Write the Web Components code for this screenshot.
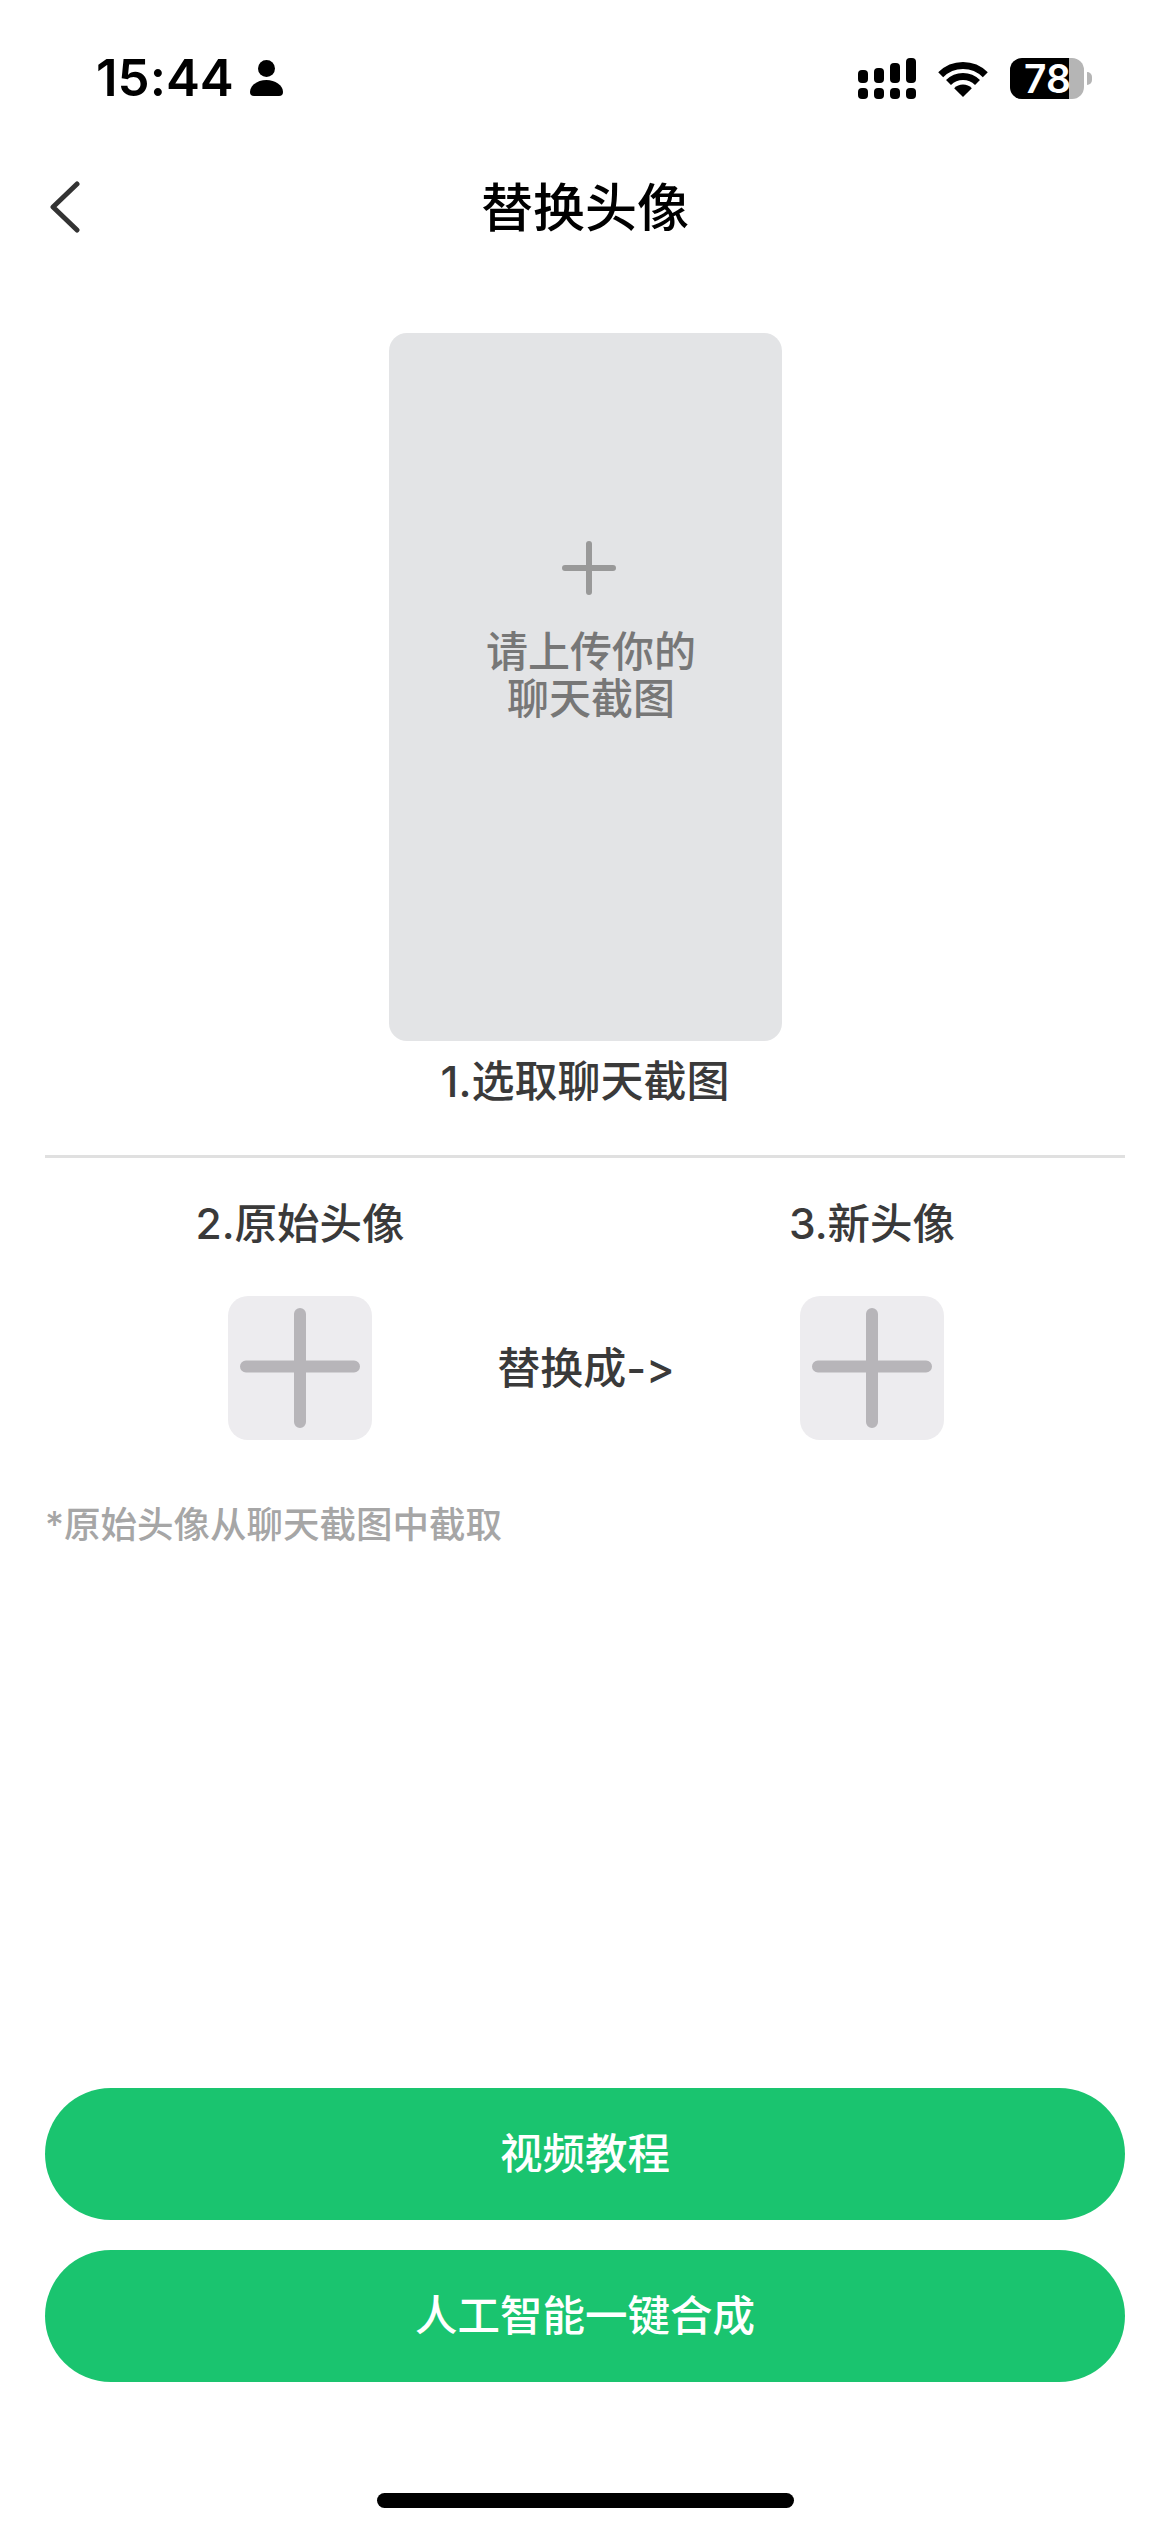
<!DOCTYPE html>
<html lang="zh-CN">
<head>
<meta charset="utf-8">
<title>替换头像</title>
<style>
  html, body { margin: 0; padding: 0; background: #fff; }
  body {
    width: 1170px;
    height: 2532px;
    overflow: hidden;
    font-family: Inter, "Noto Sans CJK SC", sans-serif;
    font-variant-ligatures: none;
    font-feature-settings: "calt" 0;
  }
</style>
</head>
<body>
<swap-app>
  <status-bar slot="top" time="15:44" battery="78"></status-bar>
  <nav-bar slot="top">替换头像</nav-bar>
  <upload-card slot="top">请上传你的<br>聊天截图</upload-card>
  <step-label slot="top" class="first">1.选取聊天截图</step-label>
  <swap-row slot="top">
    <avatar-slot slot="from">2.原始头像</avatar-slot>
    <span slot="middle">替换成-&gt;</span>
    <avatar-slot slot="to">3.新头像</avatar-slot>
  </swap-row>
  <hint-text slot="top">*原始头像从聊天截图中截取</hint-text>
  <action-button slot="bottom">视频教程</action-button>
  <action-button slot="bottom">人工智能一键合成</action-button>
</swap-app>

<script>
class BaseElement extends HTMLElement {
  connectedCallback() {
    if (!this.shadowRoot) this.attachShadow({ mode: "open" });
    this.shadowRoot.innerHTML = `<style>${this.constructor.styles}</style>${this.markup()}`;
  }
}

class SwapApp extends BaseElement {
  static get styles() {
    return /* css */`
      :host { display: flex; flex-direction: column; height: 2532px; background: #fff; }
      .top { flex: 1; display: flex; flex-direction: column; }
      .bottom { display: flex; flex-direction: column; gap: 30px; padding: 0 45px; }
      .home {
        width: 417px;
        height: 15px;
        margin: 111px auto 24px;
        border-radius: 8px;
        background: #000;
      }
    `;
  }

  markup() {
    return /* html */`
      <div class="top"><slot name="top"></slot></div>
      <div class="bottom"><slot name="bottom"></slot></div>
      <div class="home"></div>
    `;
  }
}

class StatusBar extends BaseElement {
  static get styles() {
    return /* css */`
      :host {
        display: flex;
        align-items: center;
        height: 156px;
        padding: 0 78px 0 96px;
        box-sizing: border-box;
        color: #000;
      }
      .time { font-size: 51px; font-weight: 600; line-height: 60px; }
      .person { margin-left: 16px; }
      .right { margin-left: auto; display: flex; align-items: center; gap: 22px; }
      svg { display: block; }
      .battery { display: flex; align-items: center; gap: 3px; }
      .shell {
        display: flex;
        width: 74px;
        height: 41px;
        border-radius: 12px;
        background: #b5b5b5;
      }
      .fill {
        display: flex;
        justify-content: flex-end;
        width: 59px;
        border-radius: 12px 0 0 12px;
        background: #000;
        color: #fff;
        font-size: 39px;
        font-weight: 600;
        line-height: 41px;
      }
      .fill span { margin-right: -2px; }
      .nub { width: 5px; height: 13px; border-radius: 0 6px 6px 0; background: #b5b5b5; }
    `;
  }

  markup() {
    return /* html */`
      <span class="time">${this.getAttribute("time")}</span>
      <svg class="person" width="33" height="36" viewBox="0 0 33 36" fill="#000">
        <circle cx="16.5" cy="8.5" r="8.5"/>
        <path d="M4 36Q0 36 0 32C0 25 8 20 16.5 20C25 20 33 25 33 32Q33 36 29 36Z"/>
      </svg>
      <div class="right">
        <svg width="58" height="41" viewBox="0 0 58 41" fill="#000">
          <rect x="0" y="12" width="10" height="13" rx="4"/>
          <rect x="16" y="10" width="10" height="15" rx="4"/>
          <rect x="32" y="5" width="10" height="20" rx="4"/>
          <rect x="48" y="0" width="10" height="25" rx="4"/>
          <rect x="0" y="30" width="10" height="11" rx="4"/>
          <rect x="16" y="30" width="10" height="11" rx="4"/>
          <rect x="32" y="30" width="10" height="11" rx="4"/>
          <rect x="48" y="30" width="10" height="11" rx="4"/>
        </svg>
        <svg width="50" height="37" viewBox="0 0 50 37">
          <path d="M2.7 14.7A31.5 31.5 0 0 1 47.3 14.7" fill="none" stroke="#000" stroke-width="7"/>
          <path d="M10.5 22.5A20.5 20.5 0 0 1 39.5 22.5" fill="none" stroke="#000" stroke-width="7"/>
          <path d="M25 37L16.16 28.16A12.5 12.5 0 0 1 33.84 28.16Z" fill="#000"/>
        </svg>
        <div class="battery">
          <div class="shell"><div class="fill"><span>${this.getAttribute("battery")}</span></div></div>
          <div class="nub"></div>
        </div>
      </div>
    `;
  }
}

class NavBar extends BaseElement {
  static get styles() {
    return /* css */`
      :host {
        display: flex;
        align-items: center;
        justify-content: center;
        position: relative;
        box-sizing: border-box;
        height: 102px;
        padding-bottom: 6px;
        font-size: 52px;
        font-weight: 500;
        color: #000;
      }
      svg { position: absolute; left: 50px; top: 25px; }
    `;
  }

  markup() {
    return /* html */`
      <svg width="30" height="52" viewBox="0 0 30 52">
        <path d="M27 3L3 26L27 49" fill="none" stroke="#333" stroke-width="5" stroke-linecap="round" stroke-linejoin="round"/>
      </svg>
      <slot></slot>
    `;
  }
}

class UploadCard extends BaseElement {
  static get styles() {
    return /* css */`
      :host {
        display: flex;
        flex-direction: column;
        align-items: center;
        box-sizing: border-box;
        width: 393px;
        height: 708px;
        margin: 75px auto 0;
        padding: 208px 0 0 8px;
        border-radius: 18px;
        background: #e3e4e6;
      }
      svg { display: block; }
      .text {
        margin-top: 33px;
        padding-left: 4px;
        font-size: 42px;
        font-weight: 500;
        line-height: 47px;
        color: #777;
        text-align: center;
      }
    `;
  }

  markup() {
    return /* html */`
      <svg width="54" height="54" viewBox="0 0 54 54">
        <path d="M3 27H51M27 3V51" stroke="#999" stroke-width="6" stroke-linecap="round"/>
      </svg>
      <div class="text"><slot></slot></div>
    `;
  }
}

class StepLabel extends BaseElement {
  static get styles() {
    return /* css */`
      :host {
        display: block;
        box-sizing: border-box;
        margin: 15px 45px 0;
        height: 102px;
        border-bottom: 3px solid #e0e0e0;
        font-size: 43px;
        font-weight: 500;
        line-height: 50px;
        color: #3a3a3a;
        text-align: center;
      }
    `;
  }

  markup() {
    return `<slot></slot>`;
  }
}

class SwapRow extends BaseElement {
  static get styles() {
    return /* css */`
      :host {
        display: grid;
        grid-template-columns: 340px 1fr 340px;
        padding: 41px 128px 0 130px;
      }
      .middle {
        display: flex;
        align-items: flex-end;
        justify-content: center;
        padding-bottom: 47px;
        font-size: 43px;
        font-weight: 500;
        line-height: 50px;
        color: #3a3a3a;
      }
    `;
  }

  markup() {
    return /* html */`
      <slot name="from"></slot>
      <div class="middle"><slot name="middle"></slot></div>
      <slot name="to"></slot>
    `;
  }
}

class AvatarSlot extends BaseElement {
  static get styles() {
    return /* css */`
      :host { display: flex; flex-direction: column; align-items: center; }
      .label { font-size: 42.5px; font-weight: 500; line-height: 50px; color: #3a3a3a; }
      .box {
        display: flex;
        align-items: center;
        justify-content: center;
        width: 144px;
        height: 144px;
        margin-top: 47px;
        border-radius: 20px;
        background: #edecef;
      }
      svg { display: block; }
    `;
  }

  markup() {
    return /* html */`
      <div class="label"><slot></slot></div>
      <div class="box">
        <svg width="120" height="120" viewBox="0 0 120 120">
          <path d="M6 58.5H114M60 6V114" stroke="#b7b5b9" stroke-width="12" stroke-linecap="round"/>
        </svg>
      </div>
    `;
  }
}

class HintText extends BaseElement {
  static get styles() {
    return /* css */`
      :host {
        display: block;
        margin: 60px 45px 0;
        font-size: 36.5px;
        font-weight: 500;
        line-height: 50px;
        color: #a6a6a6;
      }
    `;
  }

  markup() {
    return `<slot></slot>`;
  }
}

class ActionButton extends BaseElement {
  static get styles() {
    return /* css */`
      :host {
        display: flex;
        align-items: center;
        justify-content: center;
        box-sizing: border-box;
        height: 132px;
        padding-bottom: 7px;
        border-radius: 66px;
        background: #1ac46f;
        color: #fff;
        font-size: 42.5px;
        font-weight: 500;
      }
    `;
  }

  markup() {
    return `<slot></slot>`;
  }
}

customElements.define("swap-app", SwapApp);
customElements.define("status-bar", StatusBar);
customElements.define("nav-bar", NavBar);
customElements.define("upload-card", UploadCard);
customElements.define("step-label", StepLabel);
customElements.define("swap-row", SwapRow);
customElements.define("avatar-slot", AvatarSlot);
customElements.define("hint-text", HintText);
customElements.define("action-button", ActionButton);
</script>
</body>
</html>
